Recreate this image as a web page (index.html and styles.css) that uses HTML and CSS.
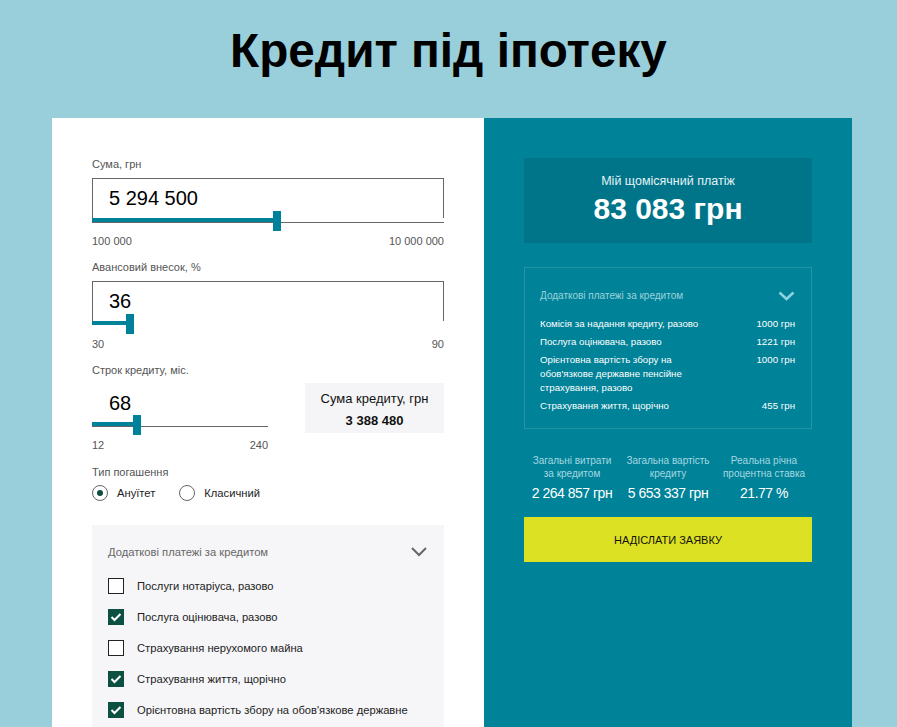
FILE: index.html
```html
<!DOCTYPE html>
<html lang="uk">
<head>
<meta charset="utf-8">
<title>Кредит під іпотеку</title>
<link rel="stylesheet" href="styles.css">
</head>
<body>
<header class="header"><h1 class="title">Кредит під іпотеку</h1></header>
<div class="wrap">
  <main class="card">
    <section class="form">
      <div class="field">
        <div class="label">Сума, грн</div>
        <div class="inputbox">5 294 500</div>
        <div class="slider"><div class="track"></div><div class="fill" style="width:181px"></div><div class="thumb" style="left:181px"></div></div>
        <div class="range"><span>100 000</span><span>10 000 000</span></div>
      </div>
      <div class="field">
        <div class="label">Авансовий внесок, %</div>
        <div class="inputbox">36</div>
        <div class="slider"><div class="fill" style="width:34px"></div><div class="thumb" style="left:34px"></div></div>
        <div class="range"><span>30</span><span>90</span></div>
      </div>
      <div class="field-row">
        <div class="field narrow">
          <div class="label">Строк кредиту, міс.</div>
          <div class="inputbox plain">68</div>
          <div class="slider"><div class="track"></div><div class="fill" style="width:41px"></div><div class="thumb" style="left:41px"></div></div>
          <div class="range"><span>12</span><span>240</span></div>
        </div>
        <div class="sumbox">
          <div class="sum-label">Сума кредиту, грн</div>
          <div class="sum-value">3 388 480</div>
        </div>
      </div>
      <div class="label type-label">Тип погашення</div>
      <div class="radios">
        <label class="radio"><span class="circle checked"></span>Ануїтет</label>
        <label class="radio"><span class="circle"></span>Класичний</label>
      </div>
      <div class="extras">
        <div class="extras-head">
          <span>Додаткові платежі за кредитом</span>
          <svg class="chev" width="16" height="10" viewBox="0 0 16 10"><polyline points="1,1 8,8 15,1" fill="none" stroke="#666" stroke-width="2"/></svg>
        </div>
        <ul class="checks">
          <li><span class="box"></span>Послуги нотаріуса, разово</li>
          <li><span class="box on"><svg width="16" height="16" viewBox="0 0 16 16"><polyline points="3.5,8 6.5,11 12.5,5" fill="none" stroke="#fff" stroke-width="2"/></svg></span>Послуга оцінювача, разово</li>
          <li><span class="box"></span>Страхування нерухомого майна</li>
          <li><span class="box on"><svg width="16" height="16" viewBox="0 0 16 16"><polyline points="3.5,8 6.5,11 12.5,5" fill="none" stroke="#fff" stroke-width="2"/></svg></span>Страхування життя, щорічно</li>
          <li><span class="box on"><svg width="16" height="16" viewBox="0 0 16 16"><polyline points="3.5,8 6.5,11 12.5,5" fill="none" stroke="#fff" stroke-width="2"/></svg></span><span class="check-text">Орієнтовна вартість збору на обов'язкове державне пенсійне страхування, разово</span></li>
        </ul>
      </div>
    </section>
    <aside class="result">
      <div class="payment">
        <div class="payment-label">Мій щомісячний платіж</div>
        <div class="payment-value">83 083 грн</div>
      </div>
      <div class="details">
        <div class="details-head">
          <span>Додаткові платежі за кредитом</span>
          <svg class="chev" width="17" height="10" viewBox="0 0 17 10"><polyline points="1.5,1.5 8.5,8 15.5,1.5" fill="none" stroke="#8fd2de" stroke-width="2.5"/></svg>
        </div>
        <div class="drow"><span class="dname">Комісія за надання кредиту, разово</span><span>1000 грн</span></div>
        <div class="drow"><span class="dname">Послуга оцінювача, разово</span><span>1221 грн</span></div>
        <div class="drow"><span class="dname">Орієнтовна вартість збору на обов'язкове державне пенсійне страхування, разово</span><span>1000 грн</span></div>
        <div class="drow"><span class="dname">Страхування життя, щорічно</span><span>455 грн</span></div>
      </div>
      <div class="stats">
        <div class="stat"><div class="stat-label">Загальні витрати за кредитом</div><div class="stat-value">2 264 857 грн</div></div>
        <div class="stat"><div class="stat-label">Загальна вартість кредиту</div><div class="stat-value">5 653 337 грн</div></div>
        <div class="stat"><div class="stat-label">Реальна річна процентна ставка</div><div class="stat-value">21.77 %</div></div>
      </div>
      <button class="send">НАДІСЛАТИ ЗАЯВКУ</button>
    </aside>
  </main>
</div>
</body>
</html>
```
FILE: styles.css
```css
* { box-sizing: border-box; }
html, body { margin: 0; padding: 0; }
body {
  background: #99cedb;
  font-family: "Liberation Sans", Arial, sans-serif;
  color: #222;
  overflow: hidden;
}
.header { height: 118px; padding-top: 27px; }
.title {
  margin: 0;
  text-align: center;
  font-size: 47.7px;
  line-height: 47px;
  font-weight: bold;
  color: #000;
}
.wrap { padding-left: 52px; }
.card {
  width: 800px;
  display: grid;
  grid-template-columns: 432px 368px;
  min-height: 700px;
}
.form { background: #fff; padding: 39px 40px 40px; }
.label { font-size: 11px; line-height: 14px; color: #555; }
.field { margin-bottom: 12px; }
.field .label { margin-bottom: 7px; }
.inputbox {
  height: 40px;
  border: 1px solid #666;
  border-bottom: none;
  padding-left: 16px;
  font-size: 20px;
  line-height: 39px;
  color: #000;
}
.inputbox.plain { border-color: transparent; height: 38px; line-height: 37px; }
.slider { position: relative; height: 20px; margin-top: -7px; }
.track { position: absolute; left: 0; right: 0; top: 11px; height: 1px; background: #666; }
.fill { position: absolute; left: 0; top: 7px; height: 4px; background: #00819a; }
.thumb { position: absolute; top: 0; width: 8px; height: 20px; background: #00819a; }
.range {
  display: flex;
  justify-content: space-between;
  font-size: 11px;
  line-height: 14px;
  color: #555;
  margin-top: 3px;
}
.field-row { display: flex; align-items: flex-start; margin-bottom: 13px; }
.field.narrow { width: 176px; margin-bottom: 0; }
.sumbox {
  margin-left: auto;
  margin-top: 20px;
  width: 139px;
  height: 50px;
  background: #f5f5f7;
  text-align: center;
  padding-top: 8px;
  color: #111;
}
.sum-label { font-size: 13px; line-height: 16px; }
.sum-value { font-size: 13px; line-height: 16px; font-weight: bold; margin-top: 6px; }
.radios { display: flex; gap: 24px; margin-top: 6px; }
.radio { display: flex; align-items: center; gap: 9px; font-size: 11.2px; line-height: 16px; color: #222; }
.circle {
  width: 16px; height: 16px;
  border: 1.5px solid #666;
  border-radius: 50%;
  display: flex; align-items: center; justify-content: center;
}
.circle.checked::after {
  content: "";
  width: 6px; height: 6px;
  border-radius: 50%;
  background: #0b4d3e;
}
.extras {
  margin-top: 24px;
  background: #f6f6f8;
  padding: 19px 17px 20px 16px;
}
.extras-head {
  display: flex;
  justify-content: space-between;
  align-items: center;
  font-size: 11.2px;
  line-height: 16px;
  color: #666;
}
.checks { list-style: none; margin: 18px 0 0; padding: 0; }
.checks li {
  display: flex;
  align-items: flex-start;
  gap: 13px;
  font-size: 11.2px;
  line-height: 16px;
  color: #222;
  margin-bottom: 15px;
}
.box {
  flex: none;
  width: 16px; height: 16px;
  border: 1.5px solid #222;
  background: #fff;
  display: flex; align-items: center; justify-content: center;
}
.box.on { background: #0b5040; border-color: #0b5040; }
.box.on svg { flex: none; }
.check-text { line-height: 21px; margin-top: -2.5px; }
.result { background: #008298; padding: 40px; color: #fff; }
.payment {
  background: #00758a;
  height: 85px;
  text-align: center;
  padding-top: 15px;
}
.payment-label { font-size: 12.5px; line-height: 16px; color: #e6f3f6; }
.payment-value { font-size: 30px; line-height: 34px; font-weight: bold; margin-top: 3px; }
.details {
  margin-top: 24px;
  border: 1px solid rgba(255,255,255,0.14);
  padding: 21px 16px 15px 15px;
}
.details-head {
  display: flex;
  justify-content: space-between;
  align-items: center;
  font-size: 10px;
  line-height: 14px;
  color: #9dd2dc;
  margin-bottom: 14px;
}
.drow {
  display: flex;
  justify-content: space-between;
  font-size: 9.7px;
  line-height: 14px;
  margin-bottom: 4px;
}
.drow:last-child { margin-bottom: 0; }
.dname { width: 170px; }
.stats { display: grid; grid-template-columns: repeat(3, 1fr); margin-top: 25px; text-align: center; }
.stat-label { font-size: 10px; line-height: 13px; color: #a6d8e2; padding: 0 6px; }
.stat-value { font-size: 14px; line-height: 18px; margin-top: 4px; letter-spacing: -0.5px; white-space: nowrap; }
.send {
  display: block;
  width: 100%;
  height: 45px;
  margin-top: 15px;
  border: none;
  background: #dde123;
  color: #111;
  font-family: "Liberation Sans", Arial, sans-serif;
  font-size: 11px;
}
```
